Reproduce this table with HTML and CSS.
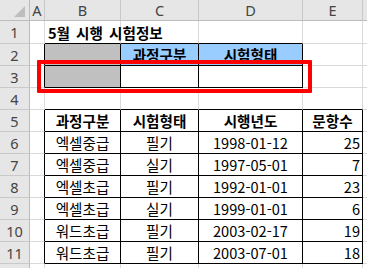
FILE: index.html
```html
<!DOCTYPE html>
<html lang="ko">
<head>
<meta charset="utf-8">
<link rel="stylesheet" href="styles.css">
</head>
<body>
<div class="sheet">
  <!-- column headers -->
  <div class="hd corner"><span class="tri"></span></div>
  <div class="hd col">A</div>
  <div class="hd col">B</div>
  <div class="hd col">C</div>
  <div class="hd col">D</div>
  <div class="hd col">E</div>
  <div class="hd col"></div>

  <!-- row 1 -->
  <div class="hd row">1</div>
  <div class="c"></div>
  <div class="c bb title-cell"><span class="title">5월 시행 시험정보</span></div>
  <div class="c bb"></div>
  <div class="c bb"></div>
  <div class="c"></div>
  <div class="c"></div>

  <!-- row 2 -->
  <div class="hd row">2</div>
  <div class="c br"></div>
  <div class="c br bb gray"></div>
  <div class="c br bb blue bold ctr">과정구분</div>
  <div class="c br bb blue bold ctr">시험형태</div>
  <div class="c"></div>
  <div class="c"></div>

  <!-- row 3 -->
  <div class="hd row">3</div>
  <div class="c br"></div>
  <div class="c br bb gray"></div>
  <div class="c br bb"></div>
  <div class="c br bb"></div>
  <div class="c"></div>
  <div class="c"></div>

  <!-- row 4 -->
  <div class="hd row">4</div>
  <div class="c"></div>
  <div class="c bb"></div>
  <div class="c bb"></div>
  <div class="c bb"></div>
  <div class="c bb"></div>
  <div class="c"></div>

  <!-- row 5 -->
  <div class="hd row">5</div>
  <div class="c br"></div>
  <div class="c br bb bold ctr">과정구분</div>
  <div class="c br bb bold ctr">시험형태</div>
  <div class="c br bb bold ctr">시행년도</div>
  <div class="c br bb bold ctr">문항수</div>
  <div class="c"></div>

  <!-- row 6 -->
  <div class="hd row">6</div>
  <div class="c br"></div>
  <div class="c br bb ctr">엑셀중급</div>
  <div class="c br bb ctr">필기</div>
  <div class="c br bb ctr">1998-01-12</div>
  <div class="c br bb num">25</div>
  <div class="c"></div>

  <!-- row 7 -->
  <div class="hd row">7</div>
  <div class="c br"></div>
  <div class="c br bb ctr">엑셀중급</div>
  <div class="c br bb ctr">실기</div>
  <div class="c br bb ctr">1997-05-01</div>
  <div class="c br bb num">7</div>
  <div class="c"></div>

  <!-- row 8 -->
  <div class="hd row">8</div>
  <div class="c br"></div>
  <div class="c br bb ctr">엑셀초급</div>
  <div class="c br bb ctr">필기</div>
  <div class="c br bb ctr">1992-01-01</div>
  <div class="c br bb num">23</div>
  <div class="c"></div>

  <!-- row 9 -->
  <div class="hd row">9</div>
  <div class="c br"></div>
  <div class="c br bb ctr">엑셀초급</div>
  <div class="c br bb ctr">실기</div>
  <div class="c br bb ctr">1999-01-01</div>
  <div class="c br bb num">6</div>
  <div class="c"></div>

  <!-- row 10 -->
  <div class="hd row">10</div>
  <div class="c br"></div>
  <div class="c br bb ctr">워드초급</div>
  <div class="c br bb ctr">필기</div>
  <div class="c br bb ctr">2003-02-17</div>
  <div class="c br bb num">19</div>
  <div class="c"></div>

  <!-- row 11 -->
  <div class="hd row">11</div>
  <div class="c br"></div>
  <div class="c br bb ctr">워드초급</div>
  <div class="c br bb ctr">필기</div>
  <div class="c br bb ctr">2003-07-01</div>
  <div class="c br bb num">18</div>
  <div class="c"></div>

  <!-- row 12 (only a sliver is visible) -->
  <div class="hd row"></div>
  <div class="c"></div>
  <div class="c"></div>
  <div class="c"></div>
  <div class="c"></div>
  <div class="c"></div>
  <div class="c"></div>

  <div class="highlight"></div>
</div>
</body>
</html>
```

FILE: styles.css
```css
html, body {
  margin: 0;
  padding: 0;
  background: #ffffff;
  overflow: hidden;
}

.sheet {
  position: relative;
  display: grid;
  grid-template-columns: 30px 15px 76px 78px 104px 60px 40px;
  grid-template-rows: 21px 23px repeat(11, 22px);
  width: 367px;
  height: 268px;
  overflow: hidden;
  font-family: "Noto Sans CJK KR", "Noto Sans", sans-serif;
  font-size: 14.6px;
  color: #000;
}

.sheet > div {
  box-sizing: border-box;
  display: flex;
  align-items: center;
  white-space: nowrap;
  line-height: 1;
}

.hd {
  background: #e6e6e6;
  color: #444;
  font-family: "Noto Sans", "Liberation Sans", sans-serif;
  font-size: 14.5px;
  justify-content: center;
  border-right: 1px solid #c9c9c9;
  border-bottom: 1px solid #c9c9c9;
}

.hd.col {
  border-bottom: 1px solid #bcbcbc;
  padding-top: 1px;
}

.hd.row {
  border-right: 1px solid #bcbcbc;
  padding-top: 1px;
}

.corner {
  position: relative;
  border-right: 1px solid #bcbcbc !important;
  border-bottom: 1px solid #bcbcbc !important;
}

.tri {
  position: absolute;
  right: 4px;
  bottom: 3px;
  width: 0;
  height: 0;
  border-left: 11px solid transparent;
  border-bottom: 11px solid #bdbdbd;
}

.c {
  border-right: 1px solid #d9d9d9;
  border-bottom: 1px solid #d9d9d9;
  padding: 2px 3px 0 3px;
}

.br { border-right: 1px solid #000 !important; }
.bb { border-bottom: 1px solid #000 !important; }

.gray { background: #c0c0c0; }
.blue { background: #99ccff; }

.bold { font-weight: bold; }
.ctr { justify-content: center; }
.num { justify-content: flex-end; padding-right: 2px; }

.title-cell {
  overflow: visible;
}

.title {
  font-weight: bold;
  font-size: 14.6px;
  word-spacing: 2px;
}

.highlight {
  position: absolute;
  left: 37px;
  top: 60px;
  width: 275px;
  height: 33px;
  border: 4px solid #ff0000;
  border-radius: 1px;
  box-sizing: border-box;
  padding: 0 !important;
}
```
